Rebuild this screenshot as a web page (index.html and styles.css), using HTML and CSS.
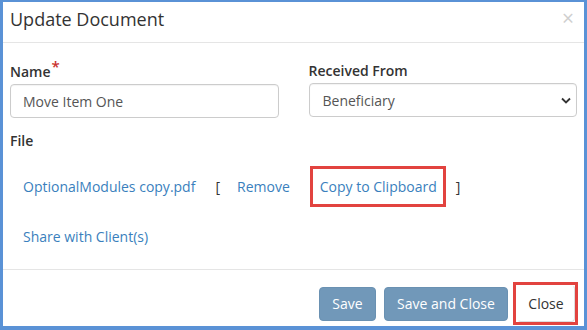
FILE: index.html
```html
<!DOCTYPE html>
<html>
<head>
    <title>Update Document</title>
    <link rel="stylesheet" href="styles.css">
</head>
<body>
    <div class="modal">
        <div class="modal-header">
            <h4 class="modal-title">Update Document</h4>
            <span class="close">&times;</span>
        </div>

        <div class="modal-body">
            <div class="form-row">
                <div class="form-group">
                    <label for="name">Name<span class="required">*</span></label>
                    <input type="text" id="name" class="form-control" value="Move Item One">
                </div>
                <div class="form-group">
                    <label for="received_from">Received From</label>
                    <div class="select-wrap">
                        <select id="received_from" class="form-control">
                            <option>Beneficiary</option>
                        </select>
                        <svg class="caret" width="10" height="7" viewBox="0 0 10 7">
                            <path d="M1 1.5 L5 5.5 L9 1.5" fill="none" stroke="#333" stroke-width="1.8"/>
                        </svg>
                    </div>
                </div>
            </div>

            <label class="file-label">File</label>
            <div class="file-row">
                <a class="link file-name">OptionalModules copy.pdf</a>
                <span class="bracket open">[</span>
                <a class="link remove">Remove</a>
                <a class="link copy highlight">Copy to Clipboard</a>
                <span class="bracket close-bracket">]</span>
            </div>
            <div class="share-row">
                <a class="link">Share with Client(s)</a>
            </div>
        </div>

        <div class="modal-footer">
            <button class="btn btn-primary btn-save">Save</button>
            <button class="btn btn-primary btn-save-close">Save and Close</button>
            <span class="highlight-btn"><button class="btn btn-default">Close</button></span>
        </div>
    </div>
</body>
</html>
```

FILE: styles.css
```css
html, body {
    margin: 0;
    padding: 0;
}
body {
    font-family: "Open Sans", Arial, sans-serif;
    font-size: 14px;
    color: #333;
    background: #fff;
}
.modal {
    width: 581px;
    height: 324px;
    border: 3px solid #5a92d6;
    border-top-width: 2px;
    border-bottom-width: 4px;
    background: #fff;
}
.modal-header {
    display: flex;
    justify-content: space-between;
    align-items: center;
    height: 40px;
    padding: 0 7px 0 7px;
    border-bottom: 1px solid #e5e5e5;
}
.modal-title {
    margin: 0;
    font-size: 18px;
    font-weight: 400;
    color: #333;
    margin-top: -7px;
}
.close {
    font-size: 21px;
    color: #cfcfcf;
    margin-top: -9px;
    margin-right: 3px;
}
.modal-body {
    padding: 18px 7px 0 7px;
    height: 208px;
    border-bottom: 1px solid #e5e5e5;
}
.form-row {
    display: flex;
    gap: 30px;
}
.form-group {
    flex: 1;
    margin-bottom: 13px;
}
label {
    display: block;
    font-weight: 600;
    margin-bottom: 2px;
    line-height: 20px;
}
.required {
    color: #c9302c;
    font-size: 15px;
    position: relative;
    top: -5px;
    margin-left: 1px;
}
.form-control {
    box-sizing: border-box;
    width: 100%;
    height: 34px;
    padding: 6px 12px;
    font-family: "Open Sans", Arial, sans-serif;
    font-size: 14px;
    color: #555;
    border: 1px solid #ccc;
    border-radius: 4px;
    background: #fff;
    box-shadow: inset 0 1px 1px rgba(0, 0, 0, 0.05);
}
.select-wrap {
    position: relative;
}
select.form-control {
    appearance: none;
    -webkit-appearance: none;
    padding-left: 13px;
}
.caret {
    position: absolute;
    right: 6px;
    top: 14px;
}
.file-label {
    margin-bottom: 0;
}
.link {
    color: #3a7fbd;
    text-decoration: none;
}
.file-row {
    display: flex;
    align-items: center;
    height: 41px;
    margin-top: 15px;
    padding-left: 13px;
}
.bracket {
    color: #333;
}
.open {
    margin-left: 20px;
}
.remove {
    margin-left: 17px;
}
.copy {
    margin-left: 20px;
}
.highlight {
    box-sizing: border-box;
    height: 41px;
    line-height: 35px;
    padding: 0 6px 0 7px;
    border: 3px solid #e2433f;
}
.close-bracket {
    margin-left: 10px;
}
.share-row {
    padding-left: 13px;
    margin-top: 20px;
}
.modal-footer {
    display: flex;
    justify-content: flex-end;
    align-items: center;
    gap: 8px;
    padding: 12px 6px 0 0;
}
.btn {
    box-sizing: border-box;
    height: 34px;
    padding: 6px 0;
    font-family: "Open Sans", Arial, sans-serif;
    font-size: 14px;
    border-radius: 4px;
    border: 1px solid transparent;
    text-align: center;
}
.btn-save {
    width: 57px;
}
.btn-save-close {
    width: 124px;
}
.btn-primary {
    background: #7198b9;
    border-color: #6a91b2;
    color: #fff;
}
.btn-default {
    background: #fff;
    border-color: #ddd;
    color: #333;
}
.highlight-btn {
    display: inline-block;
    border: 3px solid #e2433f;
    padding: 0 0 0 1px;
    margin-left: -3px;
}
.highlight-btn .btn {
    display: block;
    width: 58px;
    height: 37px;
    border-top-color: #fff;
    border-left-color: #fff;
}
```
